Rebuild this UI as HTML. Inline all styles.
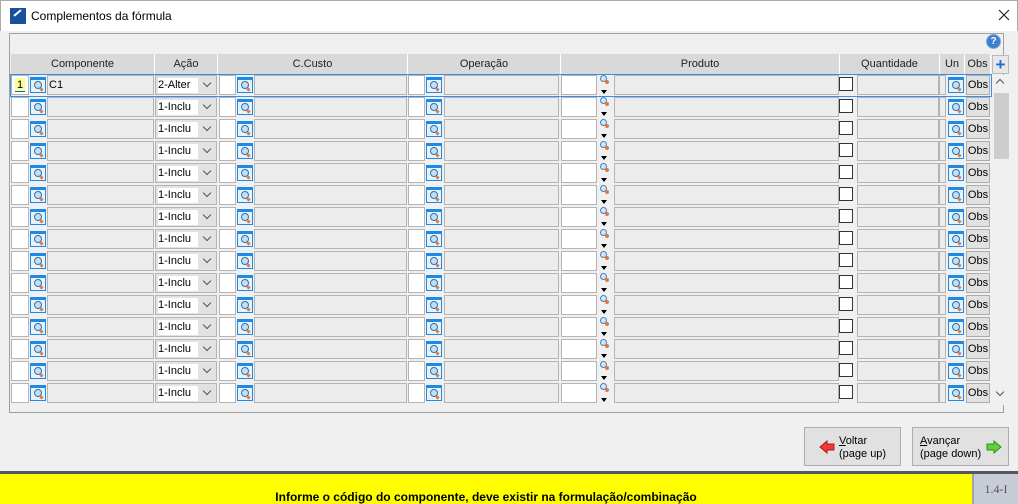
<!DOCTYPE html><html><head><meta charset="utf-8"><style>
*{box-sizing:border-box;margin:0;padding:0}
body{width:1018px;height:504px;background:#f0f0f0;font-family:"Liberation Sans",sans-serif;font-size:11px;color:#000;position:relative;overflow:hidden}
.a{position:absolute}
.tb{left:0;top:0;width:1018px;height:31px;background:#fff;border:1px solid #aaa;border-bottom:none}
.panel{left:9px;top:33px;width:995px;height:380px;border:1px solid #a0a0a0;background:#f0f0f0}
.hd{top:54px;height:20px;background:#d9d9d9;border-right:1px solid #fff;text-align:center;line-height:20px;font-size:11px;color:#222}
.r{position:absolute;left:0;width:1018px;height:22px}
.w{position:absolute;top:1px;height:20px;background:#fff;border:1px solid #b4b4b4}
.f{position:absolute;top:1px;height:20px;background:#ececec;border:1px solid #b4b4b4}
.ic{position:absolute;top:3px;width:16px;height:16px;border:1px solid #1e8ae6;border-top:3px solid #1e8ae6;background:#e6f2fc}
.ic:after{content:"";position:absolute;left:3px;top:1px;width:6px;height:6px;border:1.5px solid #3a6fa0;border-radius:50%;background:#bfe0f8}
.ic:before{content:"";position:absolute;left:9px;top:8px;width:3px;height:3px;background:#e8773a;transform:rotate(45deg)}
.sel{position:absolute;left:155px;top:1px;width:62px;height:20px;border:1px solid #b4b4b4;background:#e2e2e2}
.sel span{position:absolute;left:2px;top:2px;width:40px;height:15px;background:#fff;line-height:15px;font-size:11px}
.sel i{position:absolute;right:6px;top:4px;width:6px;height:6px;border-right:1px solid #555;border-bottom:1px solid #555;transform:rotate(45deg)}
.cb{position:absolute;left:839px;top:3px;width:14px;height:14px;background:#fff;border:1px solid #333}
.obs{position:absolute;left:966px;top:1px;width:24px;height:20px;background:#e1e1e1;border:1px solid #adadad;text-align:center;line-height:18px;font-size:11px}
.pm{position:absolute;left:600px;top:1px;width:7px;height:7px;border:1.5px solid #4a7fb0;border-radius:50%;background:#cfe6fb}
.pm:after{content:"";position:absolute;left:4px;top:4px;width:4px;height:4px;background:#e8773a;border-radius:50%}
.pa{position:absolute;left:601px;top:16px;border-left:3px solid transparent;border-right:3px solid transparent;border-top:4px solid #000}
.btn{top:427px;height:39px;background:#e1e1e1;border:1px solid #adadad;font-size:11px;line-height:13px}
</style></head><body>
<div class="a tb"></div>
<div class="a" style="left:10px;top:8px;width:16px;height:16px;background:#1a4fa0"><div style="position:absolute;left:3px;top:4px;width:9px;height:2px;background:#fff;transform:rotate(-40deg)"></div></div>
<div class="a" style="left:31px;top:9px;font-size:12px">Complementos da fórmula</div>
<svg class="a" style="left:998px;top:9px" width="12" height="12"><path d="M1 1L11 11M11 1L1 11" stroke="#222" stroke-width="1.2"/></svg>
<div class="a panel"></div>
<div class="a" style="left:986px;top:34px;width:15px;height:15px;border-radius:50%;background:#3b7fd0;border:1px solid #8ab;color:#fff;font-size:10px;font-weight:bold;text-align:center;line-height:13px">?</div>
<div class="a hd" style="left:11px;width:144px">Componente</div>
<div class="a hd" style="left:155px;width:63px">Ação</div>
<div class="a hd" style="left:218px;width:190px">C.Custo</div>
<div class="a hd" style="left:408px;width:153px">Operação</div>
<div class="a hd" style="left:561px;width:279px">Produto</div>
<div class="a hd" style="left:840px;width:100px">Quantidade</div>
<div class="a hd" style="left:940px;width:25px">Un</div>
<div class="a hd" style="left:965px;width:26px">Obs</div>
<div class="a" style="left:992px;top:55px;width:17px;height:19px;background:#e8e8e8;border:1px solid #bbb;color:#1a6fd8;font-weight:bold;font-size:17px;text-align:center;line-height:17px">+</div>
<div class="a" style="left:993px;top:75px;width:16px;height:330px;background:#f0f0f0"></div>
<div class="a" style="left:994px;top:93px;width:15px;height:66px;background:#cdcdcd"></div>
<div class="a" style="left:997px;top:80px;width:6px;height:6px;border-left:1px solid #555;border-top:1px solid #555;transform:rotate(45deg)"></div>
<div class="a" style="left:997px;top:389px;width:6px;height:6px;border-right:1px solid #555;border-bottom:1px solid #555;transform:rotate(45deg)"></div>
<div class="a" style="left:10px;top:74px;width:982px;height:23px;border:1px solid #3c8fe0"></div>

<div class="r" style="top:74px"><div class="w" style="left:11px;width:18px"><span style="position:absolute;left:3px;top:2px;background:#ffff99;width:10px;height:14px;line-height:14px;font-size:11px;text-align:center;border-bottom:1px solid #06c">1</span></div><div class="ic" style="left:30px"></div><div class="f" style="left:47px;width:107px;padding-left:1px;line-height:18px">C1</div><div class="sel"><span>2-Alter</span><i></i></div><div class="w" style="left:219px;width:17px"></div><div class="ic" style="left:237px"></div><div class="f" style="left:254px;width:153px"></div><div class="w" style="left:408px;width:17px"></div><div class="ic" style="left:426px"></div><div class="f" style="left:444px;width:115px"></div><div class="w" style="left:561px;width:36px"></div><div class="pm"></div><div class="pa"></div><div class="f" style="left:614px;width:225px"></div><div class="cb"></div><div class="f" style="left:857px;width:82px"></div><div class="f" style="left:939px;width:7px"></div><div class="ic" style="left:948px"></div><div class="obs">Obs</div></div>
<div class="r" style="top:96px"><div class="w" style="left:11px;width:18px"></div><div class="ic" style="left:30px"></div><div class="f" style="left:47px;width:107px"></div><div class="sel"><span>1-Inclu</span><i></i></div><div class="w" style="left:219px;width:17px"></div><div class="ic" style="left:237px"></div><div class="f" style="left:254px;width:153px"></div><div class="w" style="left:408px;width:17px"></div><div class="ic" style="left:426px"></div><div class="f" style="left:444px;width:115px"></div><div class="w" style="left:561px;width:36px"></div><div class="pm"></div><div class="pa"></div><div class="f" style="left:614px;width:225px"></div><div class="cb"></div><div class="f" style="left:857px;width:82px"></div><div class="f" style="left:939px;width:7px"></div><div class="ic" style="left:948px"></div><div class="obs">Obs</div></div>
<div class="r" style="top:118px"><div class="w" style="left:11px;width:18px"></div><div class="ic" style="left:30px"></div><div class="f" style="left:47px;width:107px"></div><div class="sel"><span>1-Inclu</span><i></i></div><div class="w" style="left:219px;width:17px"></div><div class="ic" style="left:237px"></div><div class="f" style="left:254px;width:153px"></div><div class="w" style="left:408px;width:17px"></div><div class="ic" style="left:426px"></div><div class="f" style="left:444px;width:115px"></div><div class="w" style="left:561px;width:36px"></div><div class="pm"></div><div class="pa"></div><div class="f" style="left:614px;width:225px"></div><div class="cb"></div><div class="f" style="left:857px;width:82px"></div><div class="f" style="left:939px;width:7px"></div><div class="ic" style="left:948px"></div><div class="obs">Obs</div></div>
<div class="r" style="top:140px"><div class="w" style="left:11px;width:18px"></div><div class="ic" style="left:30px"></div><div class="f" style="left:47px;width:107px"></div><div class="sel"><span>1-Inclu</span><i></i></div><div class="w" style="left:219px;width:17px"></div><div class="ic" style="left:237px"></div><div class="f" style="left:254px;width:153px"></div><div class="w" style="left:408px;width:17px"></div><div class="ic" style="left:426px"></div><div class="f" style="left:444px;width:115px"></div><div class="w" style="left:561px;width:36px"></div><div class="pm"></div><div class="pa"></div><div class="f" style="left:614px;width:225px"></div><div class="cb"></div><div class="f" style="left:857px;width:82px"></div><div class="f" style="left:939px;width:7px"></div><div class="ic" style="left:948px"></div><div class="obs">Obs</div></div>
<div class="r" style="top:162px"><div class="w" style="left:11px;width:18px"></div><div class="ic" style="left:30px"></div><div class="f" style="left:47px;width:107px"></div><div class="sel"><span>1-Inclu</span><i></i></div><div class="w" style="left:219px;width:17px"></div><div class="ic" style="left:237px"></div><div class="f" style="left:254px;width:153px"></div><div class="w" style="left:408px;width:17px"></div><div class="ic" style="left:426px"></div><div class="f" style="left:444px;width:115px"></div><div class="w" style="left:561px;width:36px"></div><div class="pm"></div><div class="pa"></div><div class="f" style="left:614px;width:225px"></div><div class="cb"></div><div class="f" style="left:857px;width:82px"></div><div class="f" style="left:939px;width:7px"></div><div class="ic" style="left:948px"></div><div class="obs">Obs</div></div>
<div class="r" style="top:184px"><div class="w" style="left:11px;width:18px"></div><div class="ic" style="left:30px"></div><div class="f" style="left:47px;width:107px"></div><div class="sel"><span>1-Inclu</span><i></i></div><div class="w" style="left:219px;width:17px"></div><div class="ic" style="left:237px"></div><div class="f" style="left:254px;width:153px"></div><div class="w" style="left:408px;width:17px"></div><div class="ic" style="left:426px"></div><div class="f" style="left:444px;width:115px"></div><div class="w" style="left:561px;width:36px"></div><div class="pm"></div><div class="pa"></div><div class="f" style="left:614px;width:225px"></div><div class="cb"></div><div class="f" style="left:857px;width:82px"></div><div class="f" style="left:939px;width:7px"></div><div class="ic" style="left:948px"></div><div class="obs">Obs</div></div>
<div class="r" style="top:206px"><div class="w" style="left:11px;width:18px"></div><div class="ic" style="left:30px"></div><div class="f" style="left:47px;width:107px"></div><div class="sel"><span>1-Inclu</span><i></i></div><div class="w" style="left:219px;width:17px"></div><div class="ic" style="left:237px"></div><div class="f" style="left:254px;width:153px"></div><div class="w" style="left:408px;width:17px"></div><div class="ic" style="left:426px"></div><div class="f" style="left:444px;width:115px"></div><div class="w" style="left:561px;width:36px"></div><div class="pm"></div><div class="pa"></div><div class="f" style="left:614px;width:225px"></div><div class="cb"></div><div class="f" style="left:857px;width:82px"></div><div class="f" style="left:939px;width:7px"></div><div class="ic" style="left:948px"></div><div class="obs">Obs</div></div>
<div class="r" style="top:228px"><div class="w" style="left:11px;width:18px"></div><div class="ic" style="left:30px"></div><div class="f" style="left:47px;width:107px"></div><div class="sel"><span>1-Inclu</span><i></i></div><div class="w" style="left:219px;width:17px"></div><div class="ic" style="left:237px"></div><div class="f" style="left:254px;width:153px"></div><div class="w" style="left:408px;width:17px"></div><div class="ic" style="left:426px"></div><div class="f" style="left:444px;width:115px"></div><div class="w" style="left:561px;width:36px"></div><div class="pm"></div><div class="pa"></div><div class="f" style="left:614px;width:225px"></div><div class="cb"></div><div class="f" style="left:857px;width:82px"></div><div class="f" style="left:939px;width:7px"></div><div class="ic" style="left:948px"></div><div class="obs">Obs</div></div>
<div class="r" style="top:250px"><div class="w" style="left:11px;width:18px"></div><div class="ic" style="left:30px"></div><div class="f" style="left:47px;width:107px"></div><div class="sel"><span>1-Inclu</span><i></i></div><div class="w" style="left:219px;width:17px"></div><div class="ic" style="left:237px"></div><div class="f" style="left:254px;width:153px"></div><div class="w" style="left:408px;width:17px"></div><div class="ic" style="left:426px"></div><div class="f" style="left:444px;width:115px"></div><div class="w" style="left:561px;width:36px"></div><div class="pm"></div><div class="pa"></div><div class="f" style="left:614px;width:225px"></div><div class="cb"></div><div class="f" style="left:857px;width:82px"></div><div class="f" style="left:939px;width:7px"></div><div class="ic" style="left:948px"></div><div class="obs">Obs</div></div>
<div class="r" style="top:272px"><div class="w" style="left:11px;width:18px"></div><div class="ic" style="left:30px"></div><div class="f" style="left:47px;width:107px"></div><div class="sel"><span>1-Inclu</span><i></i></div><div class="w" style="left:219px;width:17px"></div><div class="ic" style="left:237px"></div><div class="f" style="left:254px;width:153px"></div><div class="w" style="left:408px;width:17px"></div><div class="ic" style="left:426px"></div><div class="f" style="left:444px;width:115px"></div><div class="w" style="left:561px;width:36px"></div><div class="pm"></div><div class="pa"></div><div class="f" style="left:614px;width:225px"></div><div class="cb"></div><div class="f" style="left:857px;width:82px"></div><div class="f" style="left:939px;width:7px"></div><div class="ic" style="left:948px"></div><div class="obs">Obs</div></div>
<div class="r" style="top:294px"><div class="w" style="left:11px;width:18px"></div><div class="ic" style="left:30px"></div><div class="f" style="left:47px;width:107px"></div><div class="sel"><span>1-Inclu</span><i></i></div><div class="w" style="left:219px;width:17px"></div><div class="ic" style="left:237px"></div><div class="f" style="left:254px;width:153px"></div><div class="w" style="left:408px;width:17px"></div><div class="ic" style="left:426px"></div><div class="f" style="left:444px;width:115px"></div><div class="w" style="left:561px;width:36px"></div><div class="pm"></div><div class="pa"></div><div class="f" style="left:614px;width:225px"></div><div class="cb"></div><div class="f" style="left:857px;width:82px"></div><div class="f" style="left:939px;width:7px"></div><div class="ic" style="left:948px"></div><div class="obs">Obs</div></div>
<div class="r" style="top:316px"><div class="w" style="left:11px;width:18px"></div><div class="ic" style="left:30px"></div><div class="f" style="left:47px;width:107px"></div><div class="sel"><span>1-Inclu</span><i></i></div><div class="w" style="left:219px;width:17px"></div><div class="ic" style="left:237px"></div><div class="f" style="left:254px;width:153px"></div><div class="w" style="left:408px;width:17px"></div><div class="ic" style="left:426px"></div><div class="f" style="left:444px;width:115px"></div><div class="w" style="left:561px;width:36px"></div><div class="pm"></div><div class="pa"></div><div class="f" style="left:614px;width:225px"></div><div class="cb"></div><div class="f" style="left:857px;width:82px"></div><div class="f" style="left:939px;width:7px"></div><div class="ic" style="left:948px"></div><div class="obs">Obs</div></div>
<div class="r" style="top:338px"><div class="w" style="left:11px;width:18px"></div><div class="ic" style="left:30px"></div><div class="f" style="left:47px;width:107px"></div><div class="sel"><span>1-Inclu</span><i></i></div><div class="w" style="left:219px;width:17px"></div><div class="ic" style="left:237px"></div><div class="f" style="left:254px;width:153px"></div><div class="w" style="left:408px;width:17px"></div><div class="ic" style="left:426px"></div><div class="f" style="left:444px;width:115px"></div><div class="w" style="left:561px;width:36px"></div><div class="pm"></div><div class="pa"></div><div class="f" style="left:614px;width:225px"></div><div class="cb"></div><div class="f" style="left:857px;width:82px"></div><div class="f" style="left:939px;width:7px"></div><div class="ic" style="left:948px"></div><div class="obs">Obs</div></div>
<div class="r" style="top:360px"><div class="w" style="left:11px;width:18px"></div><div class="ic" style="left:30px"></div><div class="f" style="left:47px;width:107px"></div><div class="sel"><span>1-Inclu</span><i></i></div><div class="w" style="left:219px;width:17px"></div><div class="ic" style="left:237px"></div><div class="f" style="left:254px;width:153px"></div><div class="w" style="left:408px;width:17px"></div><div class="ic" style="left:426px"></div><div class="f" style="left:444px;width:115px"></div><div class="w" style="left:561px;width:36px"></div><div class="pm"></div><div class="pa"></div><div class="f" style="left:614px;width:225px"></div><div class="cb"></div><div class="f" style="left:857px;width:82px"></div><div class="f" style="left:939px;width:7px"></div><div class="ic" style="left:948px"></div><div class="obs">Obs</div></div>
<div class="r" style="top:382px"><div class="w" style="left:11px;width:18px"></div><div class="ic" style="left:30px"></div><div class="f" style="left:47px;width:107px"></div><div class="sel"><span>1-Inclu</span><i></i></div><div class="w" style="left:219px;width:17px"></div><div class="ic" style="left:237px"></div><div class="f" style="left:254px;width:153px"></div><div class="w" style="left:408px;width:17px"></div><div class="ic" style="left:426px"></div><div class="f" style="left:444px;width:115px"></div><div class="w" style="left:561px;width:36px"></div><div class="pm"></div><div class="pa"></div><div class="f" style="left:614px;width:225px"></div><div class="cb"></div><div class="f" style="left:857px;width:82px"></div><div class="f" style="left:939px;width:7px"></div><div class="ic" style="left:948px"></div><div class="obs">Obs</div></div>

<div class="a btn" style="left:804px;width:97px">
<svg style="position:absolute;left:14px;top:12px" width="16" height="14"><path d="M1 7 L8 1 V4 H15 V10 H8 V13 Z" fill="#f03a3a" stroke="#b01818"/></svg>
<div style="position:absolute;left:34px;top:7px"><u>V</u>oltar<br>(page up)</div></div>
<div class="a btn" style="left:912px;width:97px">
<div style="position:absolute;left:7px;top:7px"><u>A</u>vançar<br>(page down)</div>
<svg style="position:absolute;left:73px;top:12px" width="16" height="14"><path d="M15 7 L8 1 V4 H1 V10 H8 V13 Z" fill="#5ed03a" stroke="#2f9018"/></svg></div>
<div class="a" style="left:0;top:471px;width:1018px;height:3px;background:#505860"></div>
<div class="a" style="left:0;top:474px;width:972px;height:30px;background:#ffff00;text-align:center;font-weight:bold;font-size:12px;line-height:14px;padding-top:16px">Informe o código do componente, deve existir na formulação/combinação</div>
<div class="a" style="left:972px;top:474px;width:46px;height:30px;background:#c8ccd4;border-left:2px solid #a0a4aa;font-family:'Liberation Serif',serif;font-size:12px;color:#556;text-align:center;line-height:30px">1.4-I</div>
</body></html>
